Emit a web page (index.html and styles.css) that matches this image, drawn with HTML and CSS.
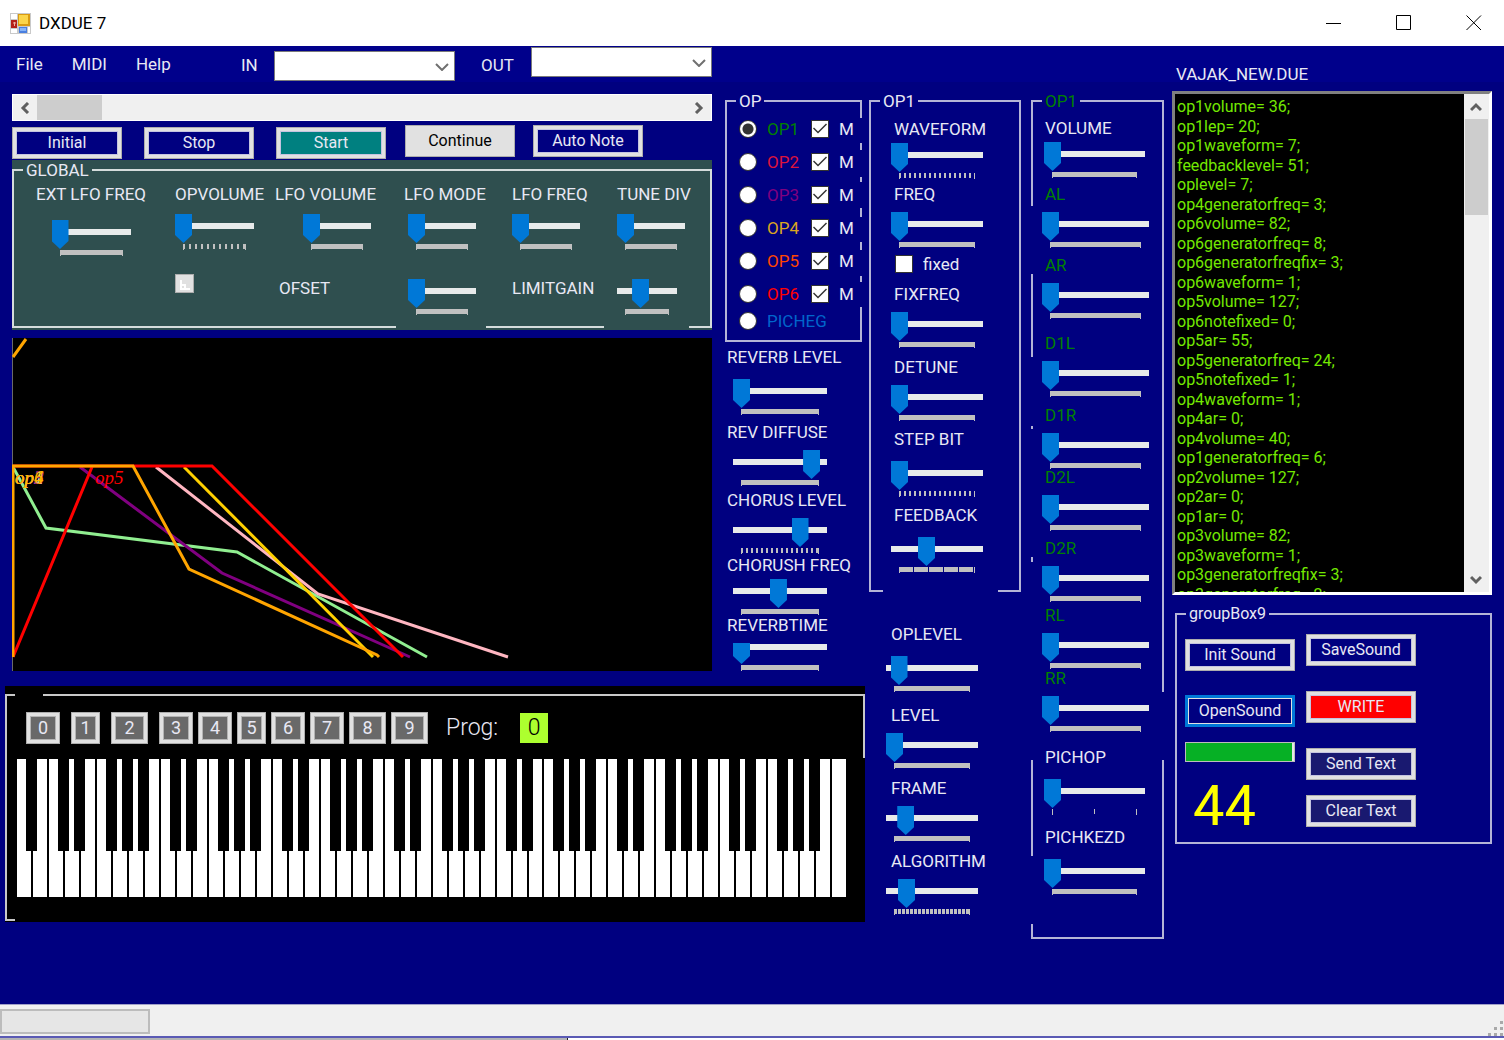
FILE: index.html
```html
<!DOCTYPE html>
<html lang="en">
  <head>
    <meta charset="utf-8">
    <title>DXDUE 7</title>
    <link rel="stylesheet" href="styles.css">
  </head>
  <body>
    <div class="window">
      <header class="titlebar">
        <svg class="app-icon" width="21" height="21" viewBox="0 0 21 21">
          <rect width="21" height="21" fill="#c9c9c9"/>
          <rect x="1" y="1" width="6" height="5" fill="#fff"/>
          <rect x="1" y="16" width="6" height="4" fill="#fff"/>
          <rect x="18" y="14" width="2" height="6" fill="#fff"/>
          <rect x="1" y="7" width="6" height="8" fill="#b32018"/>
          <path d="M3 10h3M4.500 9v4" stroke="#f0b0a0"/>
          <rect x="8" y="1" width="12" height="12" fill="#d99b12"/>
          <rect x="9" y="2" width="9" height="9" fill="#fbd54a"/>
          <rect x="9" y="14" width="8" height="6" fill="#4a7fe0"/>
          <rect x="10" y="15" width="6" height="3" fill="#86b4f8"/>
        </svg>
        <h1 class="title">DXDUE 7</h1>
        <div class="window-buttons">
          <button class="window-button" aria-label="Minimize"><svg width="16" height="16"><path d="M0 8.500h15"/></svg></button>
          <button class="window-button" aria-label="Maximize"><svg width="16" height="16"><path d="M.5.500h14v14h-14z"/></svg></button>
          <button class="window-button" aria-label="Close"><svg width="16" height="16"><path d="M.5.500l14.500 14.500M15 .500L.500 15"/></svg></button>
        </div>
      </header>

      <main class="client">
        <section class="left">
          <div class="toolbar">
            <nav class="menu">
              <a href="#file">File</a>
              <a href="#midi">MIDI</a>
              <a href="#help">Help</a>
            </nav>
            <label class="port-label" for="midi-in">IN</label>
            <span class="combo"><select id="midi-in"><option></option></select><svg width="14" height="8"><path d="M1 1l6 6 6-6"/></svg></span>
            <label class="port-label out" for="midi-out">OUT</label>
            <span class="combo top"><select id="midi-out"><option></option></select><svg width="14" height="8"><path d="M1 1l6 6 6-6"/></svg></span>
          </div>

          <div class="upper">
            <div class="main-stack">
              <div class="hscroll">
                <button class="scroll-arrow" aria-label="Scroll left"><svg width="12" height="12"><path d="M9 1L4 6l5 5"/></svg></button>
                <div class="hscroll-thumb"></div>
                <button class="scroll-arrow last" aria-label="Scroll right"><svg width="12" height="12"><path d="M3 1l5 5-5 5"/></svg></button>
              </div>

              <div class="transport">
                <div class="transport-group low">
                  <button class="btn">Initial</button>
                  <button class="btn">Stop</button>
                  <button class="btn teal">Start</button>
                </div>
                <div class="transport-group high">
                  <button class="btn plain">Continue</button>
                  <button class="btn">Auto Note</button>
                </div>
              </div>

              <div class="global">
                <fieldset class="group global-group">
                  <legend>GLOBAL</legend>
                  <div class="global-grid">
                    <label class="field center"><span>EXT LFO FREQ</span><input class="slider wide" type="range" value="0"></label>
                    <label class="field"><span>OPVOLUME</span><input class="slider wide ticks-10" type="range" value="0"></label>
                    <label class="field shifted"><span>LFO VOLUME</span><input class="slider" type="range" value="0"></label>
                    <label class="field indent"><span>LFO MODE</span><input class="slider" type="range" value="0"></label>
                    <label class="field"><span>LFO FREQ</span><input class="slider" type="range" value="0"></label>
                    <label class="field"><span>TUNE DIV</span><input class="slider" type="range" value="0"></label>
                    <div></div>
                    <button class="tiny" aria-label="Offset"><svg width="17" height="17"><path d="M5 5v9h9M5 10h4v3"/></svg></button>
                    <label class="side-label ofset" for="ofset">OFSET</label>
                    <div class="field indent only"><input class="slider" id="ofset" type="range" value="0"></div>
                    <label class="side-label" for="limitgain">LIMITGAIN</label>
                    <div class="field only"><input class="slider small" id="limitgain" type="range" value="35"></div>
                  </div>
                </fieldset>
              </div>

              <svg class="graph" height="333" viewBox="1 0 700 333" preserveAspectRatio="xMinYMin">
                <path class="axis" d="M1 0v333"/>
                <path class="env op1" d="M2 129L35 190 226 214 416 319"/>
                <path class="env op2" d="M145 129L307 256 497 319"/>
                <path class="env op3" d="M69 129L211 235 399 319"/>
                <path class="env op4" d="M173 129L362 319"/>
                <path class="env op5" d="M2 319L81 129M2 128H201L392 319"/>
                <path class="env op6" d="M2 19L15 1M2 319V128H122L178 231 366 317 368 319"/>
                <text class="op1" x="4" y="146">op1</text>
                <text class="op2" x="4" y="146">op2</text>
                <text class="op3" x="4" y="146">op3</text>
                <text class="op6" x="4" y="146">op6</text>
                <text class="op4" x="4" y="146">op4</text>
                <text class="op5" x="84" y="146">op5</text>
              </svg>
            </div>

            <div class="op-stack">
              <fieldset class="group op-group">
                <legend>OP</legend>
                <div class="op-row"><label class="c-green"><input type="radio" name="op" checked>OP1</label><label><input type="checkbox" checked>M</label></div>
                <div class="op-row"><label class="c-crimson"><input type="radio" name="op">OP2</label><label><input type="checkbox" checked>M</label></div>
                <div class="op-row"><label class="c-purple"><input type="radio" name="op">OP3</label><label><input type="checkbox" checked>M</label></div>
                <div class="op-row"><label class="c-gold"><input type="radio" name="op">OP4</label><label><input type="checkbox" checked>M</label></div>
                <div class="op-row"><label class="c-orange"><input type="radio" name="op">OP5</label><label><input type="checkbox" checked>M</label></div>
                <div class="op-row"><label class="c-red"><input type="radio" name="op">OP6</label><label><input type="checkbox" checked>M</label></div>
                <div class="op-row short"><label class="c-blue"><input type="radio" name="op">PICHEG</label></div>
              </fieldset>
              <div class="reverb">
                <label class="field loose"><span>REVERB LEVEL</span><input class="slider" type="range" value="0"></label>
                <label class="field"><span>REV DIFFUSE</span><input class="slider" type="range" value="91"></label>
                <label class="field"><span>CHORUS LEVEL</span><input class="slider ticks-16" type="range" value="76"></label>
                <label class="field tight"><span>CHORUSH FREQ</span><input class="slider" type="range" value="48"></label>
                <label class="field flush"><span>REVERBTIME</span><input class="slider clipped" type="range" value="0"></label>
              </div>
            </div>
          </div>

          <div class="keyboard">
            <fieldset class="group keyboard-group">
              <legend></legend>
              <div class="programs">
                <div class="program-set spaced">
                  <button class="prog">0</button>
                  <button class="prog slim">1</button>
                  <button class="prog big">2</button>
                </div>
                <div class="program-set">
                  <button class="prog">3</button>
                  <button class="prog">4</button>
                  <button class="prog slim">5</button>
                  <button class="prog">6</button>
                  <button class="prog">7</button>
                  <button class="prog big">8</button>
                  <button class="prog big">9</button>
                </div>
                <span class="prog-label">Prog:</span>
                <output class="prog-value">0</output>
              </div>
              <div class="keys" id="keys"></div>
            </fieldset>
          </div>
        </section>

        <section class="oscillator">
          <fieldset class="group osc-group">
            <legend>OP1</legend>
            <div class="osc-rows">
              <label class="field tight"><span>WAVEFORM</span><input class="slider ticks-16" type="range" value="0"></label>
              <label class="field"><span>FREQ</span><input class="slider" type="range" value="0"></label>
              <label class="check"><input type="checkbox">fixed</label>
              <label class="field"><span>FIXFREQ</span><input class="slider" type="range" value="0"></label>
              <label class="field"><span>DETUNE</span><input class="slider" type="range" value="0"></label>
              <label class="field loose"><span>STEP BIT</span><input class="slider ticks-16" type="range" value="0"></label>
              <label class="field loose"><span>FEEDBACK</span><input class="slider ticks-5" type="range" value="36"></label>
            </div>
          </fieldset>
          <div class="levels">
            <label class="field loose"><span>OPLEVEL</span><input class="slider" type="range" value="6"></label>
            <label class="field"><span>LEVEL</span><input class="slider" type="range" value="0"></label>
            <label class="field"><span>FRAME</span><input class="slider" type="range" value="15"></label>
            <label class="field"><span>ALGORITHM</span><input class="slider ticks-32" type="range" value="16"></label>
          </div>
        </section>

        <section class="envelope">
          <fieldset class="group env-group">
            <legend class="c-green">OP1</legend>
            <div class="env-rows">
              <label class="field tight"><span>VOLUME</span><input class="slider narrow" type="range" value="0"></label>
              <label class="field c-green"><span>AL</span><input class="slider" type="range" value="0"></label>
              <label class="field c-green"><span>AR</span><input class="slider" type="range" value="0"></label>
              <label class="field c-green"><span>D1L</span><input class="slider" type="range" value="0"></label>
              <label class="field c-green"><span>D1R</span><input class="slider" type="range" value="0"></label>
              <label class="field c-green"><span>D2L</span><input class="slider" type="range" value="0"></label>
              <label class="field c-green"><span>D2R</span><input class="slider" type="range" value="0"></label>
              <label class="field c-green"><span>RL</span><input class="slider" type="range" value="0"></label>
              <label class="field c-green"><span>RR</span><input class="slider" type="range" value="0"></label>
              <label class="field loose"><span>PICHOP</span><input class="slider narrow ticks-3" type="range" value="0"></label>
              <label class="field loose"><span>PICHKEZD</span><input class="slider narrow" type="range" value="0"></label>
            </div>
          </fieldset>
        </section>

        <section class="patch">
          <label class="patch-name" for="patch-text">VAJAK_NEW.DUE</label>
          <div class="patch-box">
            <textarea id="patch-text" class="patch-text" spellcheck="false">op1volume= 36;
op1lep= 20;
op1waveform= 7;
feedbacklevel= 51;
oplevel= 7;
op4generatorfreq= 3;
op6volume= 82;
op6generatorfreq= 8;
op6generatorfreqfix= 3;
op6waveform= 1;
op5volume= 127;
op6notefixed= 0;
op5ar= 55;
op5generatorfreq= 24;
op5notefixed= 1;
op4waveform= 1;
op4ar= 0;
op4volume= 40;
op1generatorfreq= 6;
op2volume= 127;
op2ar= 0;
op1ar= 0;
op3volume= 82;
op3waveform= 1;
op3generatorfreqfix= 3;
op3generatorfreq= 2;</textarea>
            <div class="vscroll">
              <button class="scroll-arrow" aria-label="Scroll up"><svg width="12" height="12"><path d="M1 9l5-5 5 5"/></svg></button>
              <div class="vscroll-thumb"></div>
              <button class="scroll-arrow last" aria-label="Scroll down"><svg width="12" height="12"><path d="M1 3l5 5 5-5"/></svg></button>
            </div>
          </div>
          <fieldset class="group patch-group">
            <legend>groupBox9</legend>
            <div class="patch-actions">
              <div class="patch-left">
                <button class="btn">Init Sound</button>
                <button class="btn focused">OpenSound</button>
                <div class="progress" role="progressbar" aria-label="Transfer" aria-valuenow="98"><div class="progress-bar" style="width: 98%"></div></div>
                <output class="counter">44</output>
              </div>
              <div class="patch-right">
                <button class="btn">SaveSound</button>
                <button class="btn red">WRITE</button>
                <button class="btn midnight last-pair">Send Text</button>
                <button class="btn midnight">Clear Text</button>
              </div>
            </div>
          </fieldset>
        </section>
      </main>

      <footer class="statusbar">
        <div class="status-progress"></div>
        <svg class="grip" width="16" height="16"><path d="M12 1h3v3h-3zM6 7h3v3h-3zM12 7h3v3h-3zM0 13h3v3h-3zM6 13h3v3h-3zM12 13h3v3h-3z"/></svg>
      </footer>
      <div class="desktop"></div>
    </div>
    <script>
      // 52 white keys starting at A, black key after every note except B and E
      var notes = "ABCDEFG";
      var keys = document.getElementById("keys");
      for (var i = 0; i < 52; i++) {
        var note = notes[i % 7];
        var key = document.createElement("div");
        key.className = "key";
        if (note != "B" && note != "E" && i < 51) {
          var black = document.createElement("div");
          black.className = "black-key";
          key.appendChild(black);
        }
        keys.appendChild(key);
      }
    </script>
  </body>
</html>
```
FILE: styles.css
```css
* {
    box-sizing: border-box;
}
body {
    margin: 0;
    font: 400 17px/20px Roboto, "Liberation Sans", sans-serif;
    color: #e8e8f4;
    background: #000080;
}
button, select, textarea, input {
    font: inherit;
    margin: 0;
}
svg {
    display: block;
    fill: none;
}
.window {
    --line: #b4b4d6;
    min-height: 100vh;
    display: flex;
    flex-direction: column;
}

/* title bar */
.titlebar {
    height: 46px;
    background: #fff;
    color: #000;
    display: flex;
    align-items: center;
    padding-left: 10px;
}
.title {
    font: inherit;
    margin: 0 0 0 8px;
}
.window-buttons {
    margin-left: auto;
    display: flex;
}
.window-button {
    width: 70px;
    height: 46px;
    padding: 0 0 0 22px;
    border: 0;
    background: none;
}
.window-button:last-child {
    width: 60px;
}
.window-button path {
    stroke: #000;
}

/* client area */
.client {
    flex: 1;
    display: grid;
    grid-template-columns: 865fr 157fr 142fr 340fr;
    align-items: start;
    background: linear-gradient(#00008b 0 36px, #000080 36px);
}
.group {
    min-width: 0;
    margin: 0;
    padding: 0;
    border: 0;
    border-top: 2px solid var(--line);
    background-origin: border-box;
    background-repeat: no-repeat;
    background-image: linear-gradient(var(--line) 0 100%), linear-gradient(var(--line) 0 100%), linear-gradient(var(--line) 0 100%);
    background-position: 0 0, 100% 0, 0 100%;
    background-size: 2px 100%, 2px 100%, 100% 2px;
}
.group legend {
    margin-left: 11px;
    padding: 0 3px;
    height: 20px;
}

/* menu and ports */
.toolbar {
    height: 47px;
    padding: 1px 153px 8px 16px;
    display: flex;
    align-items: center;
}
.menu {
    display: flex;
    gap: 29px;
    flex: 1;
    padding-bottom: 4px;
}
.menu a {
    color: inherit;
    text-decoration: none;
}
.port-label {
    width: 33px;
    padding-bottom: 2px;
}
.port-label.out {
    width: 76px;
    padding-left: 26px;
}
.combo {
    position: relative;
    width: 181px;
    height: 30px;
}
.combo.top {
    align-self: flex-start;
}
.combo select {
    width: 100%;
    height: 100%;
    appearance: none;
    border: 1px solid #7a7a7a;
    border-radius: 0;
    background: #fff;
}
.combo svg {
    position: absolute;
    right: 6px;
    top: 12px;
    stroke: #707070;
    stroke-width: 2;
    pointer-events: none;
}

.upper {
    display: grid;
    grid-template-columns: 712fr 153fr;
}
.main-stack {
    padding: 1px 0 0 12px;
}
.hscroll {
    height: 27px;
    background: #f0f0f0;
    border: 1px solid #fff;
    display: flex;
}
.hscroll-thumb {
    width: 65px;
    background: #cdcdcd;
}
.scroll-arrow {
    width: 24px;
    height: 25px;
    padding: 0;
    border: 0;
    background: none;
    display: grid;
    place-items: center;
}
.scroll-arrow path {
    stroke: #606060;
    stroke-width: 3;
}
.hscroll .last {
    margin-left: auto;
}

/* buttons */
.btn, .prog {
    width: 110px;
    height: 32px;
    padding: 0;
    border: 1px solid #adadad;
    border-radius: 0;
    background: #000080;
    box-shadow: inset 0 0 0 3px #e1e1e1, inset 0 0 0 4px #c4c4e0;
    color: #e8e8f4;
    font-size: 16px;
}
.btn.teal {
    background: #008080;
}
.btn.red {
    background: #f00;
}
.btn.midnight {
    background: #191970;
}
.btn.plain {
    background: #e1e1e1;
    box-shadow: none;
    color: #000;
}
.btn.focused {
    border: 3px solid #0078d7;
    box-shadow: inset 0 0 0 1px #e1e1e1;
}
.transport {
    height: 39px;
    padding-top: 4px;
    display: flex;
    gap: 19px;
}
.transport-group {
    display: flex;
}
.transport-group.low {
    gap: 22px;
    align-items: flex-end;
    padding-bottom: 1px;
}
.transport-group.high {
    gap: 18px;
}

/* slider fields */
.field {
    display: flex;
    flex-direction: column;
    align-items: flex-start;
    gap: 8px;
}
.field.tight {
    gap: 4px;
}
.field.loose {
    gap: 12px;
}
.field.flush {
    gap: 0;
}
.slider {
    --ticks: linear-gradient(#c0c0c0, #c0c0c0);
    appearance: none;
    width: 92px;
    height: 36px;
    flex: none;
    background:
        linear-gradient(#e7eaea, #e7eaea) 0 9px / 100% 6px no-repeat,
        linear-gradient(#c0c0c0, #c0c0c0) 8px 30px / 1px 6px no-repeat,
        linear-gradient(#c0c0c0, #c0c0c0) calc(100% - 8px) 30px / 1px 6px no-repeat,
        var(--ticks) center 30px / calc(100% - 16px) 5px no-repeat;
}
.slider::-webkit-slider-runnable-track {
    height: 36px;
}
.slider::-webkit-slider-thumb {
    appearance: none;
    width: 17px;
    height: 29px;
    background: #0078d7;
    clip-path: polygon(0 0, 100% 0, 100% 21px, 50% 100%, 0 21px);
}
.slider.clipped {
    clip-path: inset(8px 0 0);
}
.slider.ticks-3 {
    --ticks: linear-gradient(90deg, transparent 49%, #c0c0c0 49% 51%, transparent 51%);
}
.slider.ticks-5 {
    --ticks: repeating-linear-gradient(90deg, #c0c0c0 0 14px, transparent 14px 15px);
}
.slider.ticks-10 {
    --ticks: repeating-linear-gradient(90deg, #c0c0c0 0 2px, transparent 2px 6px);
}
.slider.ticks-16 {
    --ticks: repeating-linear-gradient(90deg, #c0c0c0 0 2px, transparent 2px 5px);
}
.slider.ticks-32 {
    --ticks: repeating-linear-gradient(90deg, #c0c0c0 0 3px, transparent 3px 4px);
}

/* global */
.global {
    --line: #d5dcdc;
    background: #2f4f4f;
    height: 170px;
}
.global-group {
    height: 168px;
    background-image: linear-gradient(var(--line) 0 100%), linear-gradient(var(--line) 0 100%),
        linear-gradient(90deg, var(--line) 0 384px, transparent 384px 474px, var(--line) 474px 592px, transparent 592px 677px, var(--line) 677px);
}
.global-grid {
    display: grid;
    grid-template-columns: 139fr 100fr 129fr 108fr 105fr 95fr;
    grid-template-rows: 90px 50px;
    padding: 4px 0 0 24px;
}
.global .field {
    gap: 10px;
}
.global .slider {
    width: 68px;
}
.global .slider.wide {
    width: 79px;
}
.global .slider.small {
    width: 60px;
}
.global .center {
    align-items: center;
    justify-self: start;
    gap: 16px;
}
.global .shifted .slider {
    margin-left: 28px;
}
.global .indent .slider {
    margin-left: 4px;
}
.global .only {
    padding-top: 5px;
}
.tiny {
    width: 19px;
    height: 19px;
    padding: 0;
    border: 1px solid #adadad;
    background: #e1e1e1;
}
.tiny path {
    stroke: #fff;
    stroke-width: 2;
}
.side-label {
    padding-top: 4px;
}
.side-label.ofset {
    padding-left: 4px;
}

/* envelope graph */
.graph {
    width: 100%;
    margin-top: 8px;
    background: #000;
}
.graph .axis {
    stroke: #696969;
    stroke-width: 2;
}
.graph .env {
    stroke-width: 3;
}
.graph path.op1 { stroke: #90ee90; }
.graph path.op2 { stroke: #ffb6c1; }
.graph path.op3 { stroke: #800080; }
.graph path.op4 { stroke: #ffd000; }
.graph path.op5 { stroke: #f00; }
.graph path.op6 { stroke: #ffa500; }
.graph text {
    font: italic 19px "Liberation Serif", serif;
}
.graph text.op1 { fill: #90ee90; }
.graph text.op2 { fill: #ffb6c1; }
.graph text.op3 { fill: #800080; }
.graph text.op4 { fill: #ffb800; }
.graph text.op5 { fill: #f00; }
.graph text.op6 { fill: #ffa500; }

/* operator select */
.op-stack {
    padding: 0 3px 0 13px;
    margin-top: -2px;
}
.op-group {
    height: 251px;
    padding-top: 1px;
    background-image: linear-gradient(var(--line) 0 100%),
        linear-gradient(var(--line) 0 18px, transparent 18px 43px, var(--line) 43px 50px, transparent 50px 77px, var(--line) 77px 82px, transparent 82px 108px, var(--line) 108px 117px, transparent 117px 142px, var(--line) 142px 150px, transparent 150px 176px, var(--line) 176px 182px, transparent 182px 207px, var(--line) 207px),
        linear-gradient(var(--line) 0 100%);
}
.op-row {
    height: 33px;
    padding-left: 14px;
    display: grid;
    grid-template-columns: 72px 1fr;
    align-items: center;
}
.op-row.short {
    height: 22px;
}
.op-row label, .check {
    display: flex;
    align-items: center;
    gap: 10px;
}
.op-row.short label {
    grid-column: 1 / 3;
}
input[type=radio] {
    appearance: none;
    width: 18px;
    height: 18px;
    border: 1px solid #333;
    border-radius: 50%;
    background: #fff;
}
input[type=radio]:checked {
    background: radial-gradient(#333 5px, #fff 6px);
}
input[type=checkbox] {
    appearance: none;
    width: 18px;
    height: 18px;
    border: 1px solid #333;
    background: #fff;
}
input[type=checkbox]:checked::after {
    content: "";
    display: block;
    width: 16px;
    height: 16px;
    background: #333;
    clip-path: polygon(1px 8px, 2px 7px, 6px 11px, 14px 3px, 15px 4px, 6px 13px);
}
.c-green { color: #008000; }
.c-crimson { color: #dc143c; }
.c-purple { color: #800080; }
.c-gold { color: #daa520; }
.c-orange { color: #ff4500; }
.c-red { color: #f00; }
.c-blue { color: #0066cc; }

.reverb {
    display: grid;
    grid-template-rows: 75px 68px 65px 60px 56px;
    padding: 5px 0 0 8px;
}
.reverb .slider {
    width: 94px;
}
.reverb span {
    margin-left: -6px;
}

/* keyboard */
.keyboard {
    --line: #c8c8c8;
    margin: 15px 0 0 5px;
    background: #000;
    height: 236px;
}
.keyboard-group {
    height: 235px;
    background-image: linear-gradient(var(--line) 0 100%),
        linear-gradient(var(--line) 0 64px, transparent 64px),
        linear-gradient(90deg, var(--line) 0 10px, transparent 10px);
}
.keyboard-group legend {
    width: 28px;
    height: 18px;
    margin-left: 10px;
}
.programs {
    display: flex;
    align-items: center;
    padding: 8px 0 0 21px;
}
.program-set {
    display: flex;
    gap: 5px;
}
.program-set.spaced {
    gap: 11px;
    margin-right: 11px;
}
.prog {
    width: 34px;
    background: #696969;
    box-shadow: inset 0 0 0 3px #e1e1e1, inset 0 0 0 4px #b4b4b4;
    font-size: 18px;
}
.prog.slim {
    width: 29px;
}
.prog.big {
    width: 37px;
}
.prog-label {
    font-size: 23px;
    font-weight: 300;
    margin: 0 22px 0 18px;
}
.prog-value {
    width: 28px;
    height: 30px;
    line-height: 30px;
    text-align: center;
    font-size: 23px;
    font-weight: 300;
    color: #000;
    background: #adff2f;
}
.keys {
    display: flex;
    margin: 15px 18px 0 11px;
    height: 138px;
}
.key {
    flex: 1;
    position: relative;
    background: #fff;
    border: solid #000;
    border-width: 0 1px;
}
.black-key {
    position: absolute;
    top: 0;
    right: -6px;
    width: 11px;
    height: 92px;
    background: #000;
    z-index: 1;
}

/* operator settings */
.oscillator {
    padding: 45px 1px 0 4px;
}
.osc-group {
    height: 501px;
    background-image: linear-gradient(var(--line) 0 100%), linear-gradient(var(--line) 0 100%),
        linear-gradient(90deg, var(--line) 0 14px, transparent 14px 129px, var(--line) 129px);
}
.osc-rows {
    display: grid;
    grid-template-rows: 65px 70px 30px 73px 72px 76px 80px;
    padding: 8px 0 0 22px;
}
.osc-rows span {
    padding-left: 3px;
}
.check {
    padding-left: 4px;
    align-self: start;
}
.levels {
    display: grid;
    grid-template-rows: 81px 73px 73px 62px;
    padding: 32px 0 0 17px;
}
.levels span {
    padding-left: 5px;
}

/* envelope generator */
.envelope {
    padding: 45px 0 0 9px;
}
.env-group {
    height: 848px;
    background-image:
        linear-gradient(var(--line) 0 106px, transparent 106px 174px, var(--line) 174px 257px, transparent 257px 326px, var(--line) 326px 329px, transparent 329px 457px, var(--line) 457px 462px, transparent 462px 660px, var(--line) 660px 756px, transparent 756px 824px, var(--line) 824px),
        linear-gradient(var(--line) 0 592px, transparent 592px 660px, var(--line) 660px),
        linear-gradient(var(--line) 0 100%);
}
.env-rows {
    display: grid;
    grid-template-rows: 66px 71px 78px 72px 62px 71px 67px 63px 79px 80px 110px;
    padding: 7px 0 0 11px;
}
.env-rows span {
    padding-left: 3px;
}
.env-rows .slider {
    width: 107px;
}
.env-rows .slider.narrow {
    width: 101px;
    margin-left: 2px;
}

/* patch text */
.patch {
    padding: 18px 12px 0 8px;
    display: flex;
    flex-direction: column;
}
.patch-name {
    padding-left: 4px;
}
.patch-box {
    height: 504px;
    margin-top: 7px;
    display: flex;
    border: 3px solid;
    border-color: #808080 #fff #fff #808080;
    background: #000;
}
.patch-text {
    flex: 1;
    min-width: 0;
    border: 0;
    padding: 3px 2px 0;
    resize: none;
    overflow: hidden;
    background: #000;
    color: #74e800;
    font-size: 16px;
    line-height: 1.22;
}
.vscroll {
    width: 25px;
    background: #f0f0f0;
    display: flex;
    flex-direction: column;
}
.vscroll-thumb {
    height: 96px;
    margin: 0 1px;
    background: #cdcdcd;
}
.vscroll .last {
    margin-top: auto;
}
.patch-group {
    margin: 9px 0 0 3px;
    height: 240px;
}
.patch-group legend {
    font-size: 16px;
}
.patch-actions {
    display: flex;
    gap: 11px;
    padding: 10px 0 0 10px;
}
.patch-left, .patch-right {
    display: flex;
    flex-direction: column;
}
.patch-left {
    padding-top: 5px;
}
.patch-left .btn {
    margin-bottom: 24px;
}
.patch-left .btn.focused {
    margin-bottom: 15px;
}
.patch-right {
    gap: 25px;
}
.patch-right .last-pair {
    margin-bottom: -10px;
}
.progress {
    height: 20px;
    border: 1px solid #bcbcbc;
    background: #e6e6e6;
}
.progress-bar {
    height: 100%;
    background: #06b025;
}
.counter {
    margin: 14px 0 0 8px;
    font-size: 56px;
    line-height: 60px;
    color: #ff0;
}

/* status bar */
.statusbar {
    height: 32px;
    background: #f0f0f0;
    border-top: 1px solid #a0a0c8;
    display: flex;
    justify-content: space-between;
    align-items: flex-end;
}
.status-progress {
    width: 150px;
    height: 25px;
    margin-bottom: 2px;
    border: 2px solid #bcbcbc;
    background: #e6e6e6;
}
.grip {
    fill: #a9a9a9;
}
.desktop {
    height: 4px;
    border-top: 2px solid #5a5ab4;
    background: linear-gradient(90deg, #b4b4b4 0 567px, #222 567px 568px, #fff 568px);
}
```
